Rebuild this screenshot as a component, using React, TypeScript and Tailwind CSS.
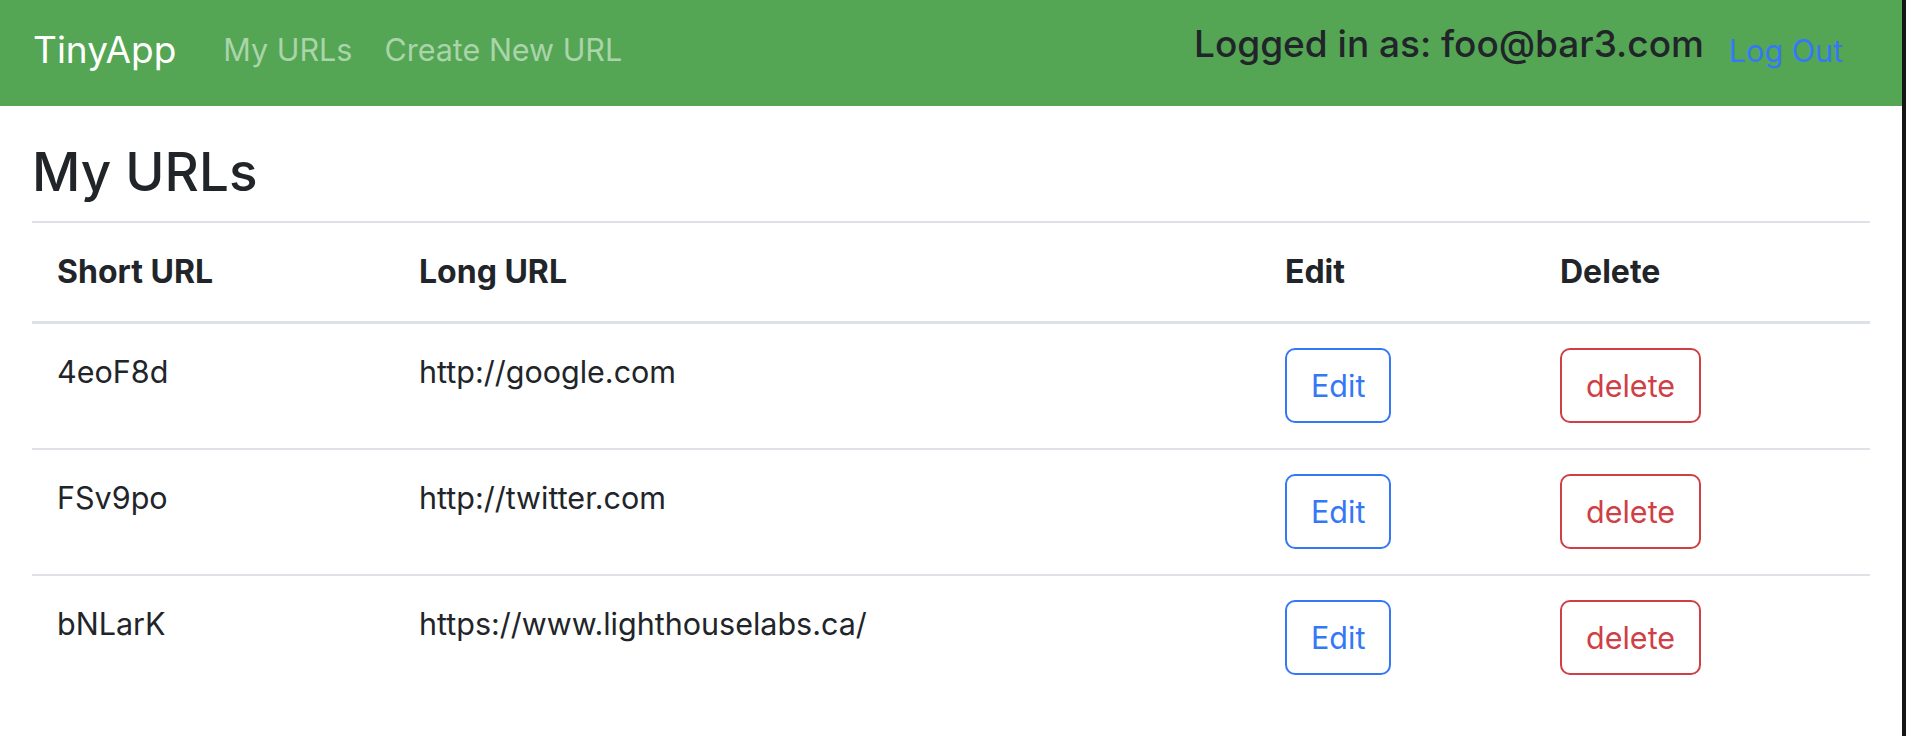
const urls = [
  { id: "4eoF8d", longURL: "http://google.com" },
  { id: "FSv9po", longURL: "http://twitter.com" },
  { id: "bNLarK", longURL: "https://www.lighthouselabs.ca/" },
];

function Header() {
  return (
    <nav className="flex h-[106px] items-center bg-[#54a654] pl-[33px] pr-[43px] pb-[6px]">
      <a className="mr-[31px] text-[37px] leading-[60px] text-white" href="#">
        TinyApp
      </a>
      <a className="px-[16px] text-[30.5px] leading-[48px] text-[#aad4aa]" href="#">
        My URLs
      </a>
      <a className="px-[16px] text-[30.5px] leading-[48px] text-[#aad4aa]" href="#">
        Create New URL
      </a>
      <div className="ml-auto flex items-center">
        <h5 className="mb-[14px] text-[37px] font-medium leading-[47px] text-[#212529]">
          Logged in as: foo@bar3.com
        </h5>
        <a className="ml-[9px] px-[16px] pt-[2px] text-[30.5px] leading-[48px] text-[#3478f6]" href="#">
          Log Out
        </a>
      </div>
    </nav>
  );
}

export default function App() {
  return (
    <div className="flex min-h-[736px] bg-white font-['Inter',sans-serif] text-[#212529]">
      <div className="flex-1">
        <Header />
        <main className="px-[32px] pt-[33px]">
          <h1 className="mb-[16px] text-[53px] font-medium leading-[66px]">My URLs</h1>
          <table className="w-full border-collapse text-[30.5px] leading-[48px]">
            <thead>
              <tr>
                <th className="w-[362px] border-t-2 border-b-[3px] border-[#dee2e6] p-[25px] text-left align-bottom text-[32px] font-bold">
                  Short URL
                </th>
                <th className="w-[866px] border-t-2 border-b-[3px] border-[#dee2e6] p-[25px] text-left align-bottom text-[32px] font-bold">
                  Long URL
                </th>
                <th className="w-[275px] border-t-2 border-b-[3px] border-[#dee2e6] p-[25px] text-left align-bottom text-[32px] font-bold">
                  Edit
                </th>
                <th className="border-t-2 border-b-[3px] border-[#dee2e6] p-[25px] text-left align-bottom text-[32px] font-bold">
                  Delete
                </th>
              </tr>
            </thead>
            <tbody>
              {urls.map((url) => (
                <tr key={url.id}>
                  <td className="border-t-2 border-[#dee2e6] px-[25px] pt-[24px] pb-[25px] align-top">{url.id}</td>
                  <td className="border-t-2 border-[#dee2e6] px-[25px] pt-[24px] pb-[25px] align-top">{url.longURL}</td>
                  <td className="border-t-2 border-[#dee2e6] px-[25px] pt-[24px] pb-[25px] align-top">
                    <button className="rounded-[10px] border-2 border-[#3478f6] px-[24px] py-[12px] leading-[47px] text-[#3478f6]">
                      Edit
                    </button>
                  </td>
                  <td className="border-t-2 border-[#dee2e6] px-[25px] pt-[24px] pb-[25px] align-top">
                    <button className="rounded-[10px] border-2 border-[#cf3f46] px-[24px] py-[12px] leading-[47px] text-[#cf3f46]">
                      delete
                    </button>
                  </td>
                </tr>
              ))}
            </tbody>
          </table>
        </main>
      </div>
      <div className="w-[4px] bg-[#151515]" />
    </div>
  );
}
